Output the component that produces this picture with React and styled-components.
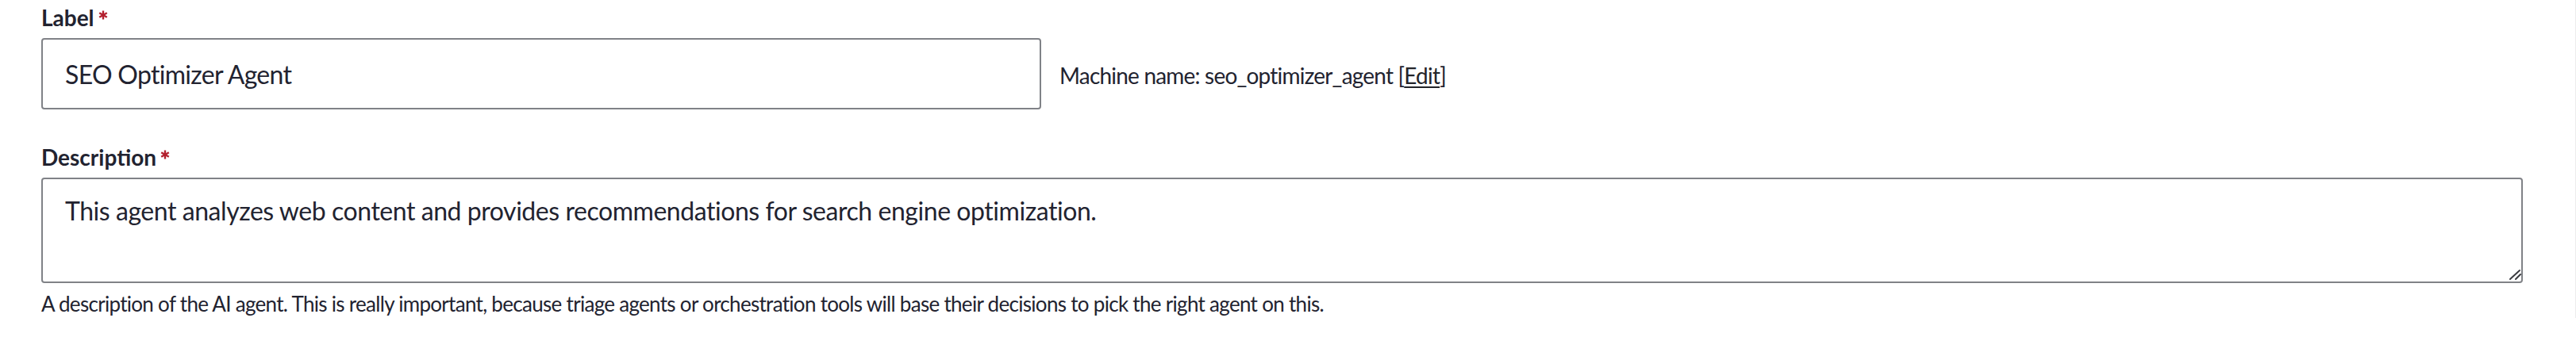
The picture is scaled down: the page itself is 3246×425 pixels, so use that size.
import React from 'react';
import styled, { createGlobalStyle } from 'styled-components';

const GlobalStyle = createGlobalStyle`
  html {
    border-right: 1px solid #ececec;
  }
  body {
    margin: 0;
    background: #fff;
    color: #222330;
    font-family: Lato, "Liberation Sans", Arial, sans-serif;
  }
`;

const Form = styled.form`
  padding: 4px 66px 0 52px;
`;

const FormItem = styled.div`
  margin-bottom: ${(p) => p.$gap || 0}px;
`;

const Label = styled.label`
  display: flex;
  align-items: flex-start;
  font-size: 28px;
  line-height: 36px;
  font-weight: 700;
  margin-bottom: 8px;
`;

const Required = styled.svg`
  width: 12px;
  height: 12px;
  margin: 9px 0 0 5px;
  flex-shrink: 0;
`;

const InlineRow = styled.div`
  display: flex;
  align-items: baseline;
`;

const TextInput = styled.input`
  box-sizing: border-box;
  width: 1260px;
  height: 90px;
  padding: 0 28px;
  border: 2px solid #808287;
  border-radius: 4px;
  background: #fff;
  color: #222330;
  font-family: inherit;
  font-size: 32px;
  letter-spacing: -0.7px;
  outline: none;
`;

const MachineName = styled.span`
  margin-left: 23px;
  font-size: 28px;
  line-height: 36px;
  letter-spacing: -0.8px;
`;

const EditLink = styled.a`
  color: #232429;
  text-decoration: underline;
  text-underline-offset: 3px;
`;

const TextareaWrap = styled.div`
  position: relative;
`;

const TextArea = styled.textarea`
  display: block;
  box-sizing: border-box;
  width: 100%;
  height: 133px;
  padding: 16px 28px;
  border: 2px solid #808287;
  border-radius: 4px;
  background: #fff;
  color: #222330;
  font-family: inherit;
  font-size: 32px;
  line-height: 48px;
  letter-spacing: -0.45px;
  resize: none;
  outline: none;
`;

const Grip = styled.svg`
  position: absolute;
  right: 2px;
  bottom: 3px;
  width: 16px;
  height: 16px;
  pointer-events: none;
`;

const Help = styled.div`
  margin-top: 8px;
  font-size: 26px;
  line-height: 36px;
  letter-spacing: -0.7px;
`;

const Asterisk = () => (
  <Required viewBox="0 0 12 12" aria-hidden="true">
    <g stroke="#b3202e" strokeWidth="2.4" strokeLinecap="butt">
      <line x1="6" y1="0.5" x2="6" y2="11.5" />
      <line x1="1.2" y1="3.2" x2="10.8" y2="8.8" />
      <line x1="1.2" y1="8.8" x2="10.8" y2="3.2" />
    </g>
  </Required>
);

export default function App() {
  return (
    <>
      <GlobalStyle />
      <Form onSubmit={(e) => e.preventDefault()}>
        <FormItem $gap={42}>
          <Label htmlFor="edit-label">
            Label
            <Asterisk />
          </Label>
          <InlineRow>
            <TextInput id="edit-label" defaultValue="SEO Optimizer Agent" />
            <MachineName>
              Machine name: seo_optimizer_agent [<EditLink href="#">Edit</EditLink>]
            </MachineName>
          </InlineRow>
        </FormItem>
        <FormItem>
          <Label htmlFor="edit-description">
            Description
            <Asterisk />
          </Label>
          <TextareaWrap>
            <TextArea
              id="edit-description"
              defaultValue="This agent analyzes web content and provides recommendations for search engine optimization."
            />
            <Grip viewBox="0 0 16 16" aria-hidden="true">
              <g stroke="#3a3b40" strokeWidth="2" strokeLinecap="round">
                <line x1="2" y1="14" x2="14" y2="3" />
                <line x1="9" y1="14" x2="15" y2="8" />
              </g>
            </Grip>
          </TextareaWrap>
          <Help>
            A description of the AI agent. This is really important, because triage agents or orchestration tools will base their decisions to pick the right agent on this.
          </Help>
        </FormItem>
      </Form>
    </>
  );
}
